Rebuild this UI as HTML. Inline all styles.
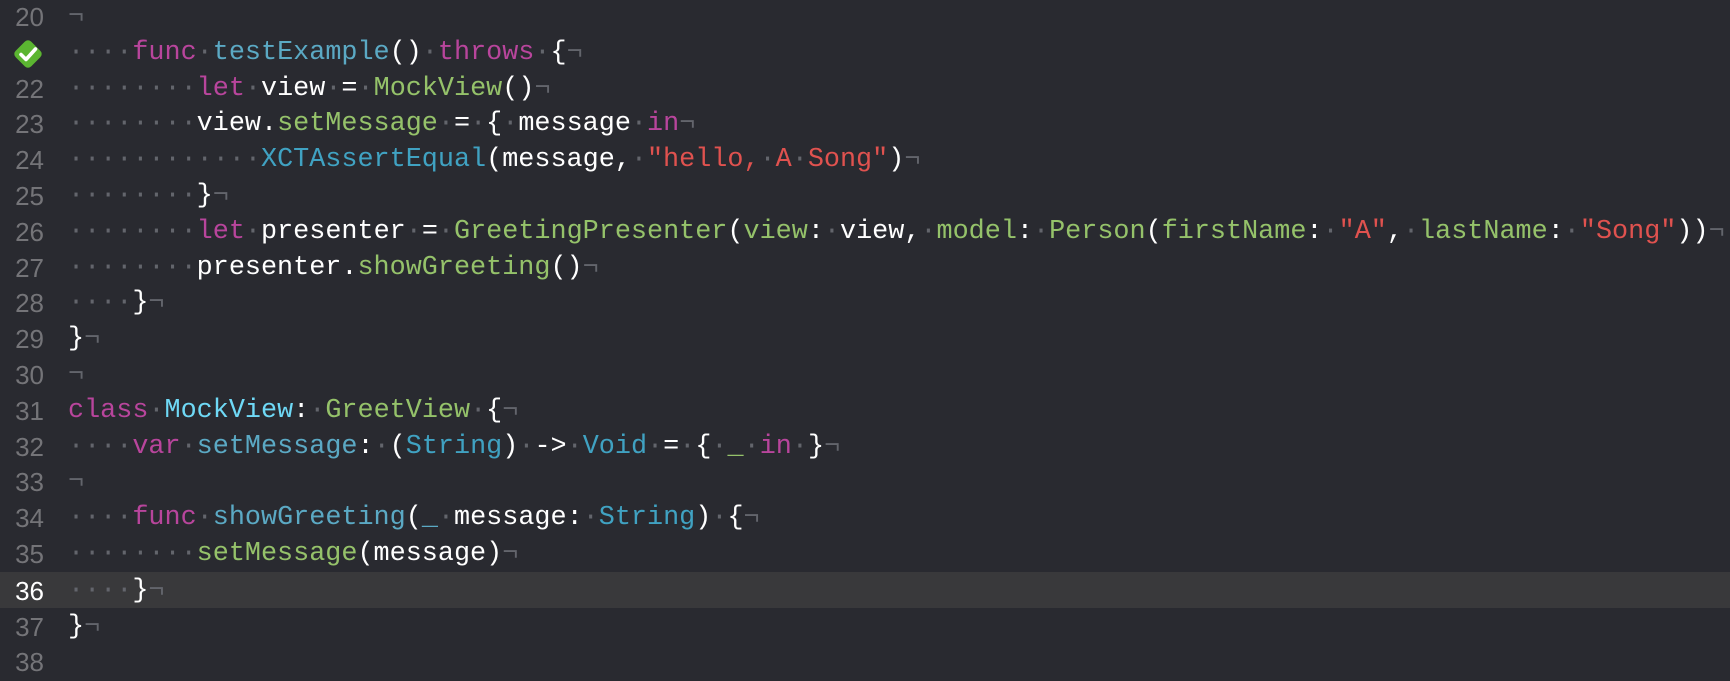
<!DOCTYPE html>
<html><head><meta charset="utf-8"><style>
html,body{margin:0;padding:0;}
body{width:1730px;height:660px;background:#292a30;overflow:hidden;position:relative;font-family:"Liberation Mono",monospace;font-size:26.8px;}
.l{position:absolute;left:0;width:1730px;height:35.8px;line-height:35.8px;white-space:pre;}
.n{position:absolute;left:0;width:44px;text-align:right;color:#747478;font-family:"Liberation Sans",sans-serif;font-size:26px;}
.c{position:absolute;left:68px;color:#ffffff;}
.d{color:#63656c}
.k{color:#b8459c}
.f{color:#5ba9c4}
.g{color:#95c26a}
.s{color:#e0524f}
.t{color:#40a2c2}
.m{color:#6fd9f6}
.hl{background:#39393b}
</style></head><body>
<div class="l" style="top:0px"><span class="n">20</span><span class="c"><span class="d">¬</span></span></div>
<div class="l" style="top:35.8px"><svg style="position:absolute;left:10px;top:0px" width="36" height="36" viewBox="0 0 36 36"><rect x="7" y="7" width="22" height="22" rx="4.5" transform="rotate(45 18 18)" fill="#5bb531"/><path d="M11 18.5 L16 23.5 L25.5 13" stroke="#fff" stroke-width="3.6" fill="none" stroke-linecap="round" stroke-linejoin="round"/></svg><span class="c"><span class="d">····</span><span class="k">func</span><span class="d">·</span><span class="f">testExample</span>()<span class="d">·</span><span class="k">throws</span><span class="d">·</span>{<span class="d">¬</span></span></div>
<div class="l" style="top:71.6px"><span class="n">22</span><span class="c"><span class="d">········</span><span class="k">let</span><span class="d">·</span>view<span class="d">·</span>=<span class="d">·</span><span class="g">MockView</span>()<span class="d">¬</span></span></div>
<div class="l" style="top:107.4px"><span class="n">23</span><span class="c"><span class="d">········</span>view.<span class="g">setMessage</span><span class="d">·</span>=<span class="d">·</span>{<span class="d">·</span>message<span class="d">·</span><span class="k">in</span><span class="d">¬</span></span></div>
<div class="l" style="top:143.2px"><span class="n">24</span><span class="c"><span class="d">············</span><span class="t">XCTAssertEqual</span>(message,<span class="d">·</span><span class="s">"hello,<span class="d">·</span>A<span class="d">·</span>Song"</span>)<span class="d">¬</span></span></div>
<div class="l" style="top:179px"><span class="n">25</span><span class="c"><span class="d">········</span>}<span class="d">¬</span></span></div>
<div class="l" style="top:214.8px"><span class="n">26</span><span class="c"><span class="d">········</span><span class="k">let</span><span class="d">·</span>presenter<span class="d">·</span>=<span class="d">·</span><span class="g">GreetingPresenter</span>(<span class="g">view</span>:<span class="d">·</span>view,<span class="d">·</span><span class="g">model</span>:<span class="d">·</span><span class="g">Person</span>(<span class="g">firstName</span>:<span class="d">·</span><span class="s">"A"</span>,<span class="d">·</span><span class="g">lastName</span>:<span class="d">·</span><span class="s">"Song"</span>))<span class="d">¬</span></span></div>
<div class="l" style="top:250.6px"><span class="n">27</span><span class="c"><span class="d">········</span>presenter.<span class="g">showGreeting</span>()<span class="d">¬</span></span></div>
<div class="l" style="top:286.4px"><span class="n">28</span><span class="c"><span class="d">····</span>}<span class="d">¬</span></span></div>
<div class="l" style="top:322.2px"><span class="n">29</span><span class="c">}<span class="d">¬</span></span></div>
<div class="l" style="top:358px"><span class="n">30</span><span class="c"><span class="d">¬</span></span></div>
<div class="l" style="top:393.8px"><span class="n">31</span><span class="c"><span class="k">class</span><span class="d">·</span><span class="m">MockView</span>:<span class="d">·</span><span class="g">GreetView</span><span class="d">·</span>{<span class="d">¬</span></span></div>
<div class="l" style="top:429.6px"><span class="n">32</span><span class="c"><span class="d">····</span><span class="k">var</span><span class="d">·</span><span class="f">setMessage</span>:<span class="d">·</span>(<span class="t">String</span>)<span class="d">·</span>-&gt;<span class="d">·</span><span class="t">Void</span><span class="d">·</span>=<span class="d">·</span>{<span class="d">·</span><span class="g">_</span><span class="d">·</span><span class="k">in</span><span class="d">·</span>}<span class="d">¬</span></span></div>
<div class="l" style="top:465.4px"><span class="n">33</span><span class="c"><span class="d">¬</span></span></div>
<div class="l" style="top:501.2px"><span class="n">34</span><span class="c"><span class="d">····</span><span class="k">func</span><span class="d">·</span><span class="f">showGreeting</span>(<span class="f">_</span><span class="d">·</span>message:<span class="d">·</span><span class="t">String</span>)<span class="d">·</span>{<span class="d">¬</span></span></div>
<div class="l" style="top:537px"><span class="n">35</span><span class="c"><span class="d">········</span><span class="g">setMessage</span>(message)<span class="d">¬</span></span></div>
<div class="l hl" style="top:572px;height:35.6px"><span class="n" style="color:#fff;top:1.8px">36</span><span class="c" style="top:1.8px"><span class="d">····</span>}<span class="d">¬</span></span></div>
<div class="l" style="top:609.6px"><span class="n">37</span><span class="c">}<span class="d">¬</span></span></div>
<div class="l" style="top:645.4px"><span class="n">38</span></div>
</body></html>
